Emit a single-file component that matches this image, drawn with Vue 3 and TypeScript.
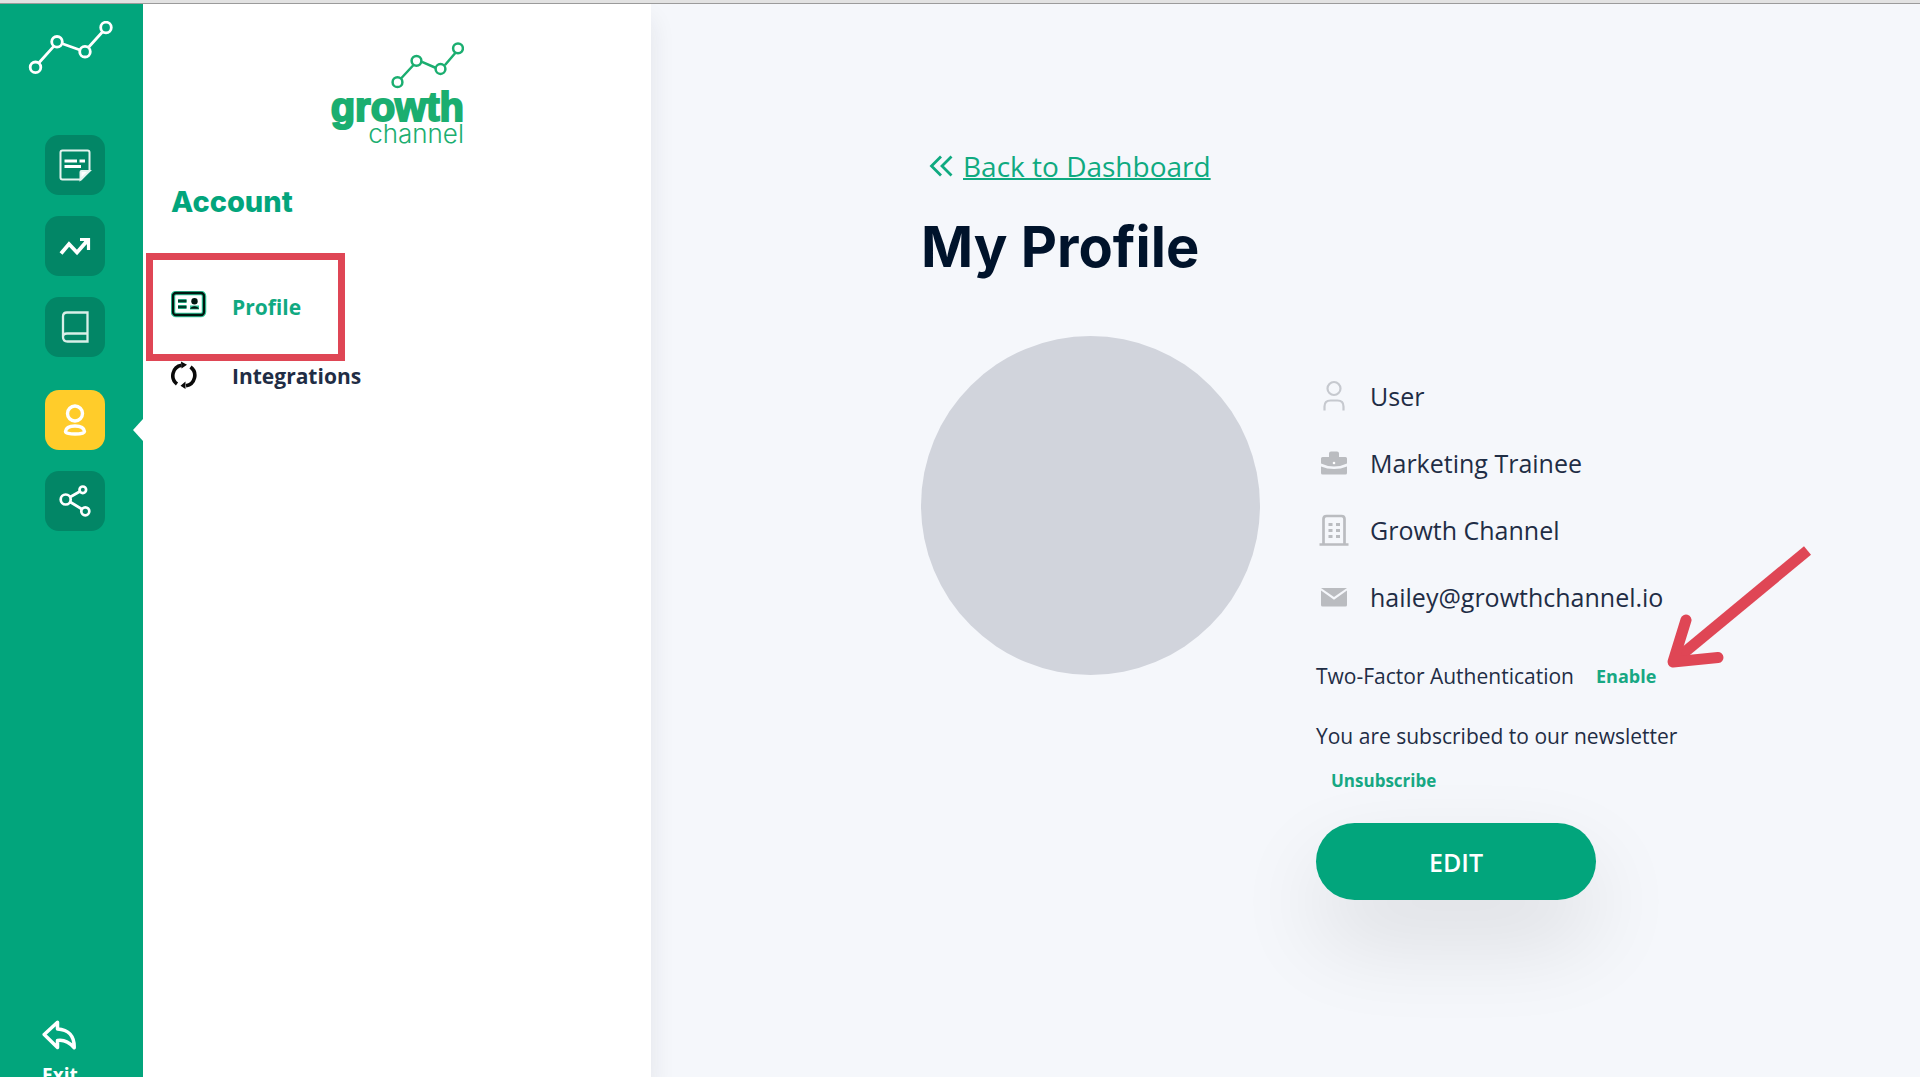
<script setup lang="ts">
import { ref } from 'vue'

type IconName = 'user' | 'briefcase' | 'building' | 'mail'

interface Detail {
  icon: IconName
  text: string
}

const details: Detail[] = [
  { icon: 'user', text: 'User' },
  { icon: 'briefcase', text: 'Marketing Trainee' },
  { icon: 'building', text: 'Growth Channel' },
  { icon: 'mail', text: 'hailey@growthchannel.io' },
]

const railItems = ['Notes', 'Trends', 'Library', 'Account', 'Share']
const active = ref('Account')
</script>

<template>
  <div class="page">
    <div class="topline"></div>
    <div class="shell">
      <nav class="rail" aria-label="Main">
        <svg class="rail-logo" width="86" height="54" viewBox="0 0 86 54" fill="none" stroke="#fff" stroke-width="2.800">
          <path d="M11.200 41.500 25.500 25.600M34.500 22.800 52 29M60.800 26 74.600 10.800" />
          <circle cx="7.500" cy="46.300" r="5.300" />
          <circle cx="29" cy="20.800" r="5.300" />
          <circle cx="57" cy="30.700" r="5.300" />
          <circle cx="78" cy="6.500" r="5.300" />
        </svg>
        <div class="tiles">
          <button
            v-for="item in railItems"
            :key="item"
            type="button"
            class="tile"
            :class="{ active: item === active }"
            :aria-label="item"
            @click="active = item"
          >
            <svg v-if="item === 'Notes'" width="34" height="34" viewBox="0 0 34 34" fill="none" stroke="#e4f4ef" stroke-width="2">
              <path d="M4.500 2.500h25q2 0 2 2v18L23 31.500H4.500q-2 0-2-2v-25q0-2 2-2z" />
              <path d="M22.500 31.500v-7.500q0-1 1-1h8z" fill="#fff" />
              <path d="M6.500 13H19M21.500 13h5.500M6.500 18.500H23" stroke="#fff" stroke-width="3" />
            </svg>
            <svg v-else-if="item === 'Trends'" width="34" height="34" viewBox="0 0 34 34" fill="none" stroke="#fff" stroke-width="3.800">
              <path d="M3 24.500 11 15l8 8.500L29 12" />
              <path d="M22 10.500h8.500V21" stroke-width="3.200" />
              <path d="M24 10h7v8z" fill="#fff" stroke="none" />
            </svg>
            <svg v-else-if="item === 'Library'" width="34" height="34" viewBox="0 0 34 34" fill="none" stroke="#d8efe8" stroke-width="2.300">
              <path d="M29.500 2.500H9q-4 0-4 4v20.500q0 4.500 4.500 4.500h20V2.500zM5 27q0-3.500 4-3.500h20.500" />
            </svg>
            <svg v-else-if="item === 'Account'" width="34" height="34" viewBox="0 0 34 34" fill="none" stroke="#fff" stroke-width="3.400">
              <circle cx="17" cy="10.500" r="7.500" />
              <path d="M7.500 28.500C8 24.500 12 23 17 23s9 1.500 9.500 5.500c0 1.800-4.500 2.500-9.500 2.500s-9.500-.7-9.500-2.500z" />
            </svg>
            <svg v-else width="34" height="34" viewBox="0 0 34 34" fill="none" stroke="#fff" stroke-width="2.700">
              <circle cx="7.700" cy="15.500" r="5" />
              <circle cx="24.800" cy="5.800" r="3.300" />
              <circle cx="27.300" cy="27.300" r="4" />
              <path d="M12.200 13 21.800 7.500M12.200 18 23.600 25" />
            </svg>
          </button>
        </div>
        <a href="#" class="exit">
          <svg width="34" height="30" viewBox="0 0 34 30" fill="none" stroke="#fff" stroke-width="3.500" stroke-linejoin="round">
            <path d="M15.500 2.200 2.200 14.500 15.500 27.500V20.500c6-1 11.500 1.500 16.700 7.200C32.500 16 26.500 9.500 15.500 9z" />
          </svg>
          <span>Exit</span>
        </a>
        <span class="notch"></span>
      </nav>

      <aside class="panel">
        <div class="brand">
          <svg width="74" height="47" viewBox="0 0 74 47" fill="none" stroke="#1bae70" stroke-width="2.500">
            <path d="M11 36.500 23.500 23M32 19.800 46 26M54.800 23.300 65.500 10.700" />
            <circle cx="7.500" cy="40.200" r="4.900" />
            <circle cx="26.500" cy="18.800" r="4.900" />
            <circle cx="50.500" cy="27" r="4.900" />
            <circle cx="68" cy="6.300" r="4.900" />
          </svg>
          <span class="brand-main">growth</span>
          <span class="brand-sub">channel</span>
        </div>
        <h2>Account</h2>
        <nav class="menu" aria-label="Account">
          <a href="#" class="menu-item current">
            <svg width="36" height="32" viewBox="0 0 36 32" fill="none">
              <rect x="2" y="2" width="31" height="22" rx="3" stroke="#35c79b" stroke-width="4.500" />
              <rect x="2" y="2" width="31" height="22" rx="3" stroke="#00160f" stroke-width="2.300" />
              <path d="M7 10h8.500M7 16h8.500M19 16.500h9" stroke="#35c79b" stroke-width="4" />
              <path d="M7 10h8.500M7 16h8.500" stroke="#003d2b" stroke-width="2.300" />
              <circle cx="23.500" cy="10.200" r="3.200" fill="#00160f" />
              <path d="M19 17.800c1-3.500 8-3.500 9 0z" fill="#00160f" />
            </svg>
            <span>Profile</span>
            <span class="highlight"></span>
          </a>
          <a href="#" class="menu-item">
            <svg width="36" height="32" viewBox="0 0 36 32" fill="none" stroke="#0a0a0a" stroke-width="3.600">
              <path d="M6 24A10.500 10.500 0 0 1 10.500 5.300M19.500 7A10.500 10.500 0 0 1 15 25.800" />
              <path d="M10 1.500l6 3.200-5.500 3.800zM14.500 21.500v7.500l-5-3.200z" fill="#0a0a0a" stroke="none" />
            </svg>
            <span>Integrations</span>
          </a>
        </nav>
      </aside>

      <main class="content">
        <a href="#" class="back">
          <svg width="24" height="22" viewBox="0 0 24 22" fill="none" stroke="#0faa80" stroke-width="2.800">
            <path d="M12 1.500 2.500 11 12 20.500M22.500 1.500 13 11l9.500 9.500" />
          </svg>
          <span>Back to Dashboard</span>
        </a>
        <h1>My Profile</h1>
        <section class="profile">
          <div class="avatar"></div>
          <div class="info">
            <ul class="details">
              <li v-for="d in details" :key="d.text">
                <svg v-if="d.icon === 'user'" width="36" height="34" viewBox="0 0 36 34" fill="none" stroke="#c6c9cf" stroke-width="2.200">
                  <circle cx="18" cy="9.500" r="6.500" />
                  <path d="M8.500 31.500v-4q0-6 6-6h7q6 0 6 6v4" />
                </svg>
                <svg v-else-if="d.icon === 'briefcase'" width="36" height="34" viewBox="0 0 36 34" fill="#babcc0">
                  <path d="M13 11V7.500Q13 5.500 15 5.500h6q2 0 2 2V11h6.500q1.500 0 1.500 1.500v5q-6 3-13 3t-13-3v-5Q5 11 6.500 11z" />
                  <path d="M5 20.500q6 2.500 13 2.500T31 20.500V27q0 1.500-1.500 1.500h-23Q5 28.500 5 27z" />
                  <circle cx="18" cy="17" r="1.300" fill="#fff" />
                </svg>
                <svg v-else-if="d.icon === 'building'" width="36" height="34" viewBox="0 0 36 34" fill="none" stroke="#babcc0" stroke-width="2.700">
                  <path d="M7.500 31V6q0-3 3-3h15q3 0 3 3v25M3.500 31.500h29" />
                  <path d="M12.500 11.500h4M20 11.500h4M12.500 17.500h4M20 17.500h4M12.500 23.500h4M20 23.500h4" stroke-width="3.200" />
                </svg>
                <svg v-else width="36" height="34" viewBox="0 0 36 34" fill="#babcc0">
                  <path d="M5 8h26L18 17z" />
                  <path d="M5 10.500 18 19.800 31 10.500V25q0 1.500-1.500 1.500h-23Q5 26.500 5 25z" />
                </svg>
                <span>{{ d.text }}</span>
              </li>
            </ul>
            <div class="twofa">
              <span>Two-Factor Authentication</span>
              <button type="button" class="text-btn enable">Enable</button>
              <svg class="arrow" width="150" height="134" viewBox="0 0 150 134" fill="none" stroke="#df4655" stroke-width="11">
                <path d="M145.500 10.500 12 121" />
                <path d="M24 80 11 122 56 117.500" stroke-linecap="round" stroke-linejoin="round" />
              </svg>
            </div>
            <p class="news">You are subscribed to our newsletter</p>
            <button type="button" class="text-btn unsub">Unsubscribe</button>
            <button type="button" class="edit">EDIT</button>
          </div>
        </section>
      </main>
    </div>
  </div>
</template>

<style>
body {
  margin: 0;
  background: #fff;
}
</style>

<style scoped>
.page {
  height: 100vh;
  box-sizing: border-box;
  padding-bottom: 3px;
  display: flex;
  flex-direction: column;
  overflow: hidden;
  font-family: "Open Sans", "Noto Sans", sans-serif;
  color: #1f2d45;
}
.topline {
  height: 3px;
  flex: none;
  background: #e2e2e2;
  border-bottom: 1px solid #9b9b9b;
}
.shell {
  flex: 1;
  min-height: 0;
  display: flex;
}
button {
  font-family: inherit;
  border: 0;
  padding: 0;
  background: none;
  cursor: pointer;
}
svg {
  flex: none;
  display: block;
}

/* green icon rail */
.rail {
  position: relative;
  flex: none;
  width: 143px;
  box-sizing: border-box;
  padding-top: 17px;
  background: #02a57c;
  display: flex;
  flex-direction: column;
  overflow: hidden;
}
.rail-logo {
  margin-left: 28px;
}
.tiles {
  margin: 60px 0 0 45px;
  display: flex;
  flex-direction: column;
  gap: 21px;
}
.tile {
  width: 60px;
  height: 60px;
  border-radius: 14px;
  background: #028666;
  display: flex;
  align-items: center;
  justify-content: center;
}
.tile.active {
  margin-top: 12px;
  background: #ffcc2a;
}
.exit {
  margin: auto 0 -10px 42px;
  color: #fff;
  font-size: 19px;
  line-height: 24px;
  font-weight: 700;
  text-decoration: none;
  display: flex;
  flex-direction: column;
  gap: 13px;
}
.notch {
  position: absolute;
  right: 0;
  top: 415px;
  width: 10px;
  height: 22px;
  background: #fff;
  clip-path: polygon(0 50%, 100% 0, 100% 100%);
}

/* account panel */
.panel {
  position: relative;
  z-index: 1;
  flex: none;
  width: 508px;
  box-sizing: border-box;
  padding: 38px 28px 0;
  background: #fff;
  box-shadow: 0 16px 24px rgba(30, 30, 60, 0.09);
  clip-path: inset(0 -40px 0 0);
}
.brand {
  width: 134px;
  margin: 0 auto;
  display: flex;
  flex-direction: column;
  align-items: flex-end;
  color: #1bae70;
}
.brand-main {
  font: 700 40px/36px "Liberation Sans", sans-serif;
  -webkit-text-stroke: 2px #1bae70;
}
.brand-sub {
  font: 300 26px/18px Inter, sans-serif;
}
h2 {
  margin: 41px 0 71px;
  font: 800 29px/36px Inter, sans-serif;
  color: #02a57c;
}
.menu {
  display: flex;
  flex-direction: column;
  gap: 37px;
}
.menu-item {
  position: relative;
  display: flex;
  align-items: center;
  gap: 25px;
  font-size: 21px;
  line-height: 32px;
  font-weight: 700;
  color: #1f2d45;
  text-decoration: none;
}
.menu-item.current {
  color: #10a981;
}
.highlight {
  position: absolute;
  left: -25px;
  top: -38px;
  width: 199px;
  height: 108px;
  box-sizing: border-box;
  border: 7px solid #df4655;
}

/* main area */
.content {
  flex: 1;
  min-width: 0;
  padding: 142px 40px 0 270px;
  background: #f5f7fb;
}
.back {
  width: fit-content;
  padding-left: 8px;
  display: flex;
  align-items: center;
  gap: 10px;
  font-size: 28px;
  line-height: 40px;
  color: #0faa80;
  text-decoration: none;
}
.back span {
  text-decoration: underline;
  text-decoration-thickness: 2px;
}
h1 {
  margin: 29px 0 57px;
  font: 700 56px/64px Inter, sans-serif;
  color: #00132b;
}
.profile {
  display: flex;
  align-items: flex-start;
  gap: 56px;
}
.avatar {
  flex: none;
  width: 339px;
  height: 339px;
  border-radius: 50%;
  background: #d1d4dc;
}
.info {
  padding-top: 43px;
  display: flex;
  flex-direction: column;
  align-items: flex-start;
}
.details {
  list-style: none;
  margin: 0 0 47px;
  padding: 0;
  display: flex;
  flex-direction: column;
  gap: 33px;
  font-size: 25px;
  line-height: 34px;
}
.details li {
  display: flex;
  gap: 18px;
}
.twofa {
  position: relative;
  display: flex;
  gap: 22px;
  font-size: 21px;
  line-height: 30px;
}
.text-btn {
  color: #17a883;
  font-weight: 700;
}
.enable {
  font-size: 18px;
  line-height: 30px;
}
.arrow {
  position: absolute;
  left: 346px;
  top: -121px;
}
.news {
  margin: 30px 0 18px;
  font-size: 21px;
  line-height: 30px;
}
.unsub {
  margin: 0 0 30px 15px;
  font-size: 17px;
  line-height: 24px;
}
.edit {
  width: 280px;
  height: 77px;
  border-radius: 39px;
  background: #02a57c;
  color: #fff;
  font-size: 25px;
  font-weight: 600;
  box-shadow: 0 40px 90px rgba(0, 0, 0, 0.11);
}
</style>
